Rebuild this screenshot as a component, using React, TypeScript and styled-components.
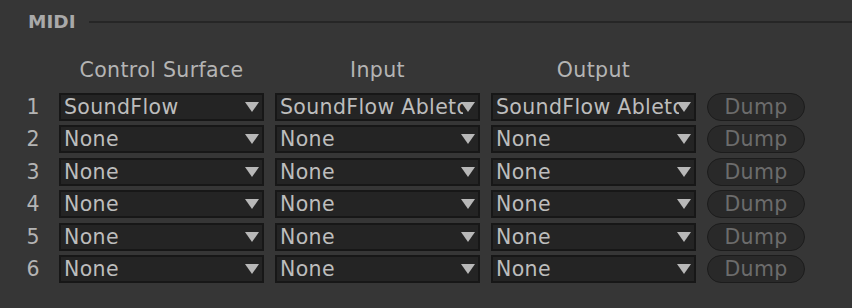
import { createGlobalStyle, styled } from 'styled-components'

const GlobalStyle = createGlobalStyle`
  body {
    margin: 0;
    background: #363636;
    font-family: "DejaVu Sans", "Liberation Sans", sans-serif;
  }
`;

const Panel = styled.div`
  width: 852px;
  height: 308px;
  background: #363636;
  overflow: hidden;
`;

const SectionHeader = styled.div`
  display: flex;
  align-items: center;
  gap: 13px;
  padding: 11px 0 0 28px;
`;

const SectionTitle = styled.h2`
  margin: 0;
  font-size: 18.5px;
  line-height: 22px;
  font-weight: bold;
  color: #a9a9a9;
`;

const Rule = styled.div`
  flex: 1;
  height: 2px;
  background: #262626;
`;

const Table = styled.div`
  display: grid;
  grid-template-columns: 24px 205px 205px 205px 98px;
  column-gap: 11px;
  row-gap: 4.4px;
  margin: 25px 0 0 24px;
  letter-spacing: 0.35px;
`;

const ColumnHead = styled.div`
  font-size: 20.5px;
  line-height: 24px;
  color: #b4b4b4;
  text-align: center;
  margin-bottom: 6.6px;
`;

const RowNumber = styled.div`
  font-size: 20.5px;
  line-height: 28px;
  color: #b4b4b4;
  text-align: right;
  padding-right: 8px;
`;

const Select = styled.div`
  position: relative;
  height: 28px;
  box-sizing: border-box;
  border: 2px solid #171717;
  background: #242424;
  padding: 0 0 0 3px;
  font-size: 20.5px;
  line-height: 24px;
  color: #bdbdbd;
`;

const Label = styled.span`
  display: block;
  margin-right: 15px;
  white-space: nowrap;
  overflow: hidden;
`;

const Arrow = styled.span`
  position: absolute;
  right: 3px;
  top: 7px;
  width: 0;
  height: 0;
  border-left: 7px solid transparent;
  border-right: 7px solid transparent;
  border-top: 10px solid #b8b8b8;
`;

const DumpButton = styled.button`
  height: 28px;
  box-sizing: border-box;
  border: 1px solid #1c1c1c;
  border-radius: 14px;
  background: #292929;
  color: #6c6c6c;
  font-family: inherit;
  font-size: 20.5px;
  line-height: 24px;
  letter-spacing: inherit;
  padding: 0;
`;

type Row = { surface: string; input: string; output: string };

const rows: Row[] = [
  { surface: 'SoundFlow', input: 'SoundFlow Ableton', output: 'SoundFlow Ableton' },
  { surface: 'None', input: 'None', output: 'None' },
  { surface: 'None', input: 'None', output: 'None' },
  { surface: 'None', input: 'None', output: 'None' },
  { surface: 'None', input: 'None', output: 'None' },
  { surface: 'None', input: 'None', output: 'None' },
];

function Dropdown({ value }: { value: string }) {
  return (
    <Select>
      <Label>{value}</Label>
      <Arrow />
    </Select>
  );
}

export default function App() {
  return (
    <Panel>
      <GlobalStyle />
      <SectionHeader>
        <SectionTitle>MIDI</SectionTitle>
        <Rule />
      </SectionHeader>
      <Table>
        <div />
        <ColumnHead>Control Surface</ColumnHead>
        <ColumnHead>Input</ColumnHead>
        <ColumnHead>Output</ColumnHead>
        <div />
        {rows.map((row, i) => (
          <>
            <RowNumber key={`n${i}`}>{i + 1}</RowNumber>
            <Dropdown key={`s${i}`} value={row.surface} />
            <Dropdown key={`i${i}`} value={row.input} />
            <Dropdown key={`o${i}`} value={row.output} />
            <DumpButton key={`d${i}`}>Dump</DumpButton>
          </>
        ))}
      </Table>
    </Panel>
  );
}
